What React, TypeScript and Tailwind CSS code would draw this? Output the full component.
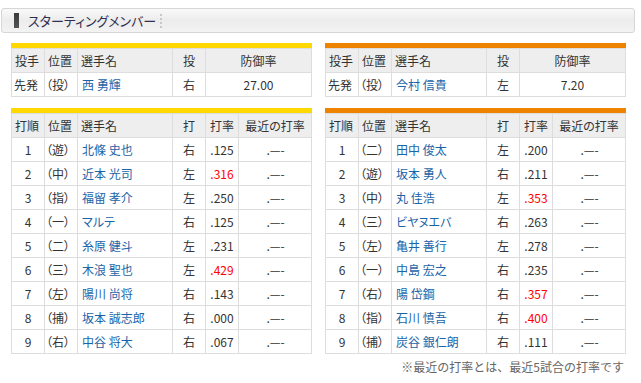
import React from "react";

type Batter = { order: string; pos: string; name: string; hand: string; avg: string; red?: boolean };

const leftPitcher = { role: "先発", pos: "（投）", name: "西 勇輝", hand: "右", era: "27.00" };
const rightPitcher = { role: "先発", pos: "（投）", name: "今村 信貴", hand: "左", era: "7.20" };

const leftBatters: Batter[] = [
  { order: "1", pos: "（遊）", name: "北條 史也", hand: "右", avg: ".125" },
  { order: "2", pos: "（中）", name: "近本 光司", hand: "左", avg: ".316", red: true },
  { order: "3", pos: "（指）", name: "福留 孝介", hand: "左", avg: ".250" },
  { order: "4", pos: "（一）", name: "マルテ", hand: "右", avg: ".125" },
  { order: "5", pos: "（二）", name: "糸原 健斗", hand: "左", avg: ".231" },
  { order: "6", pos: "（三）", name: "木浪 聖也", hand: "左", avg: ".429", red: true },
  { order: "7", pos: "（左）", name: "陽川 尚将", hand: "右", avg: ".143" },
  { order: "8", pos: "（捕）", name: "坂本 誠志郎", hand: "右", avg: ".000" },
  { order: "9", pos: "（右）", name: "中谷 将大", hand: "右", avg: ".067" },
];

const rightBatters: Batter[] = [
  { order: "1", pos: "（二）", name: "田中 俊太", hand: "左", avg: ".200" },
  { order: "2", pos: "（遊）", name: "坂本 勇人", hand: "右", avg: ".211" },
  { order: "3", pos: "（中）", name: "丸 佳浩", hand: "左", avg: ".353", red: true },
  { order: "4", pos: "（三）", name: "ビヤヌエバ", hand: "右", avg: ".263" },
  { order: "5", pos: "（左）", name: "亀井 善行", hand: "左", avg: ".278" },
  { order: "6", pos: "（一）", name: "中島 宏之", hand: "右", avg: ".235" },
  { order: "7", pos: "（右）", name: "陽 岱鋼", hand: "右", avg: ".357", red: true },
  { order: "8", pos: "（指）", name: "石川 慎吾", hand: "右", avg: ".400", red: true },
  { order: "9", pos: "（捕）", name: "炭谷 銀仁朗", hand: "右", avg: ".111" },
];

const cell = "h-[23px] flex items-center whitespace-nowrap";
const hd = "bg-[#eeeeee]";
const bd = "bg-white";

function PitcherTable({ color, p }: { color: string; p: typeof leftPitcher }) {
  return (
    <div className="w-[301px]">
      <div className={`h-[5px] ${color}`} />
      <div className="grid grid-cols-[32px_32px_94px_32px_105px] gap-px bg-[#dddddd] p-px">
        <div className={`${cell} ${hd} pl-[3px]`}>投手</div>
        <div className={`${cell} ${hd} pl-[3px]`}>位置</div>
        <div className={`${cell} ${hd} pl-[3px]`}>選手名</div>
        <div className={`${cell} ${hd} justify-center`}>投</div>
        <div className={`${cell} ${hd} justify-center`}>防御率</div>
        <div className={`${cell} ${bd} pl-[2px]`}>{p.role}</div>
        <div className={`${cell} ${bd} pl-[1px]`}>{p.pos}</div>
        <div className={`${cell} ${bd} pl-[4px] text-[#1a64a8]`}>{p.name}</div>
        <div className={`${cell} ${bd} justify-center`}>{p.hand}</div>
        <div className={`${cell} ${bd} justify-center`}>{p.era}</div>
      </div>
    </div>
  );
}

function LineupTable({ color, rows }: { color: string; rows: Batter[] }) {
  return (
    <div className="w-[301px]">
      <div className={`h-[5px] ${color}`} />
      <div className="grid grid-cols-[32px_32px_94px_32px_32px_72px] gap-px bg-[#dddddd] p-px">
        <div className={`${cell} ${hd} pl-[3px]`}>打順</div>
        <div className={`${cell} ${hd} pl-[3px]`}>位置</div>
        <div className={`${cell} ${hd} pl-[3px]`}>選手名</div>
        <div className={`${cell} ${hd} justify-center`}>打</div>
        <div className={`${cell} ${hd} justify-center`}>打率</div>
        <div className={`${cell} ${hd} justify-center`}>最近の打率</div>
        {rows.map((r) => (
          <React.Fragment key={r.order}>
            <div className={`${cell} ${bd} justify-center`}>{r.order}</div>
            <div className={`${cell} ${bd} pl-[1px]`}>{r.pos}</div>
            <div className={`${cell} ${bd} pl-[4px] text-[#1a64a8]`}>{r.name}</div>
            <div className={`${cell} ${bd} justify-center`}>{r.hand}</div>
            <div className={`${cell} ${bd} justify-center ${r.red ? "text-[#ff0000]" : ""}`}>{r.avg}</div>
            <div className={`${cell} ${bd} justify-center pl-[1px] [font-feature-settings:normal]`}>.—-</div>
          </React.Fragment>
        ))}
      </div>
    </div>
  );
}

export default function App() {
  return (
    <div
      className="w-[641px] h-[383px] bg-white overflow-hidden text-[12px] leading-none text-[#333333] [font-feature-settings:'palt']"
      style={{ fontFamily: '"Noto Sans CJK JP", "Noto Sans", sans-serif' }}
    >
      <div className="pt-[8px] pl-[1px]">
        <div className="w-[634px] h-[25px] rounded-[3px] border border-[#d6d6d6] bg-linear-to-b from-[#f9f9f9] via-[#ececec] to-[#f3f3f3] flex items-center pl-[12px]">
          <div className="w-[5px] h-[15px] bg-linear-to-b from-[#3a3a3a] to-[#555555]" />
          <div className="ml-[9px] text-[13px] text-[#2f2f4f]">スターティングメンバー</div>
          <div className="ml-[4px] h-[14px] border-l-2 border-dotted border-[#c8c8c8]" />
        </div>
      </div>
      <div className="mt-[10px] ml-[11px] grid grid-cols-[301px_301px] gap-x-[13px]">
        <PitcherTable color="bg-[#ffd800]" p={leftPitcher} />
        <PitcherTable color="bg-[#ee8300]" p={rightPitcher} />
        <div className="mt-[11px]">
          <LineupTable color="bg-[#ffd800]" rows={leftBatters} />
        </div>
        <div className="mt-[11px]">
          <LineupTable color="bg-[#ee8300]" rows={rightBatters} />
        </div>
        <div />
        <div className="mt-[7px] text-right pr-[2px] text-[#666666] [font-feature-settings:normal]">※最近の打率とは、最近5試合の打率です</div>
      </div>
    </div>
  );
}
